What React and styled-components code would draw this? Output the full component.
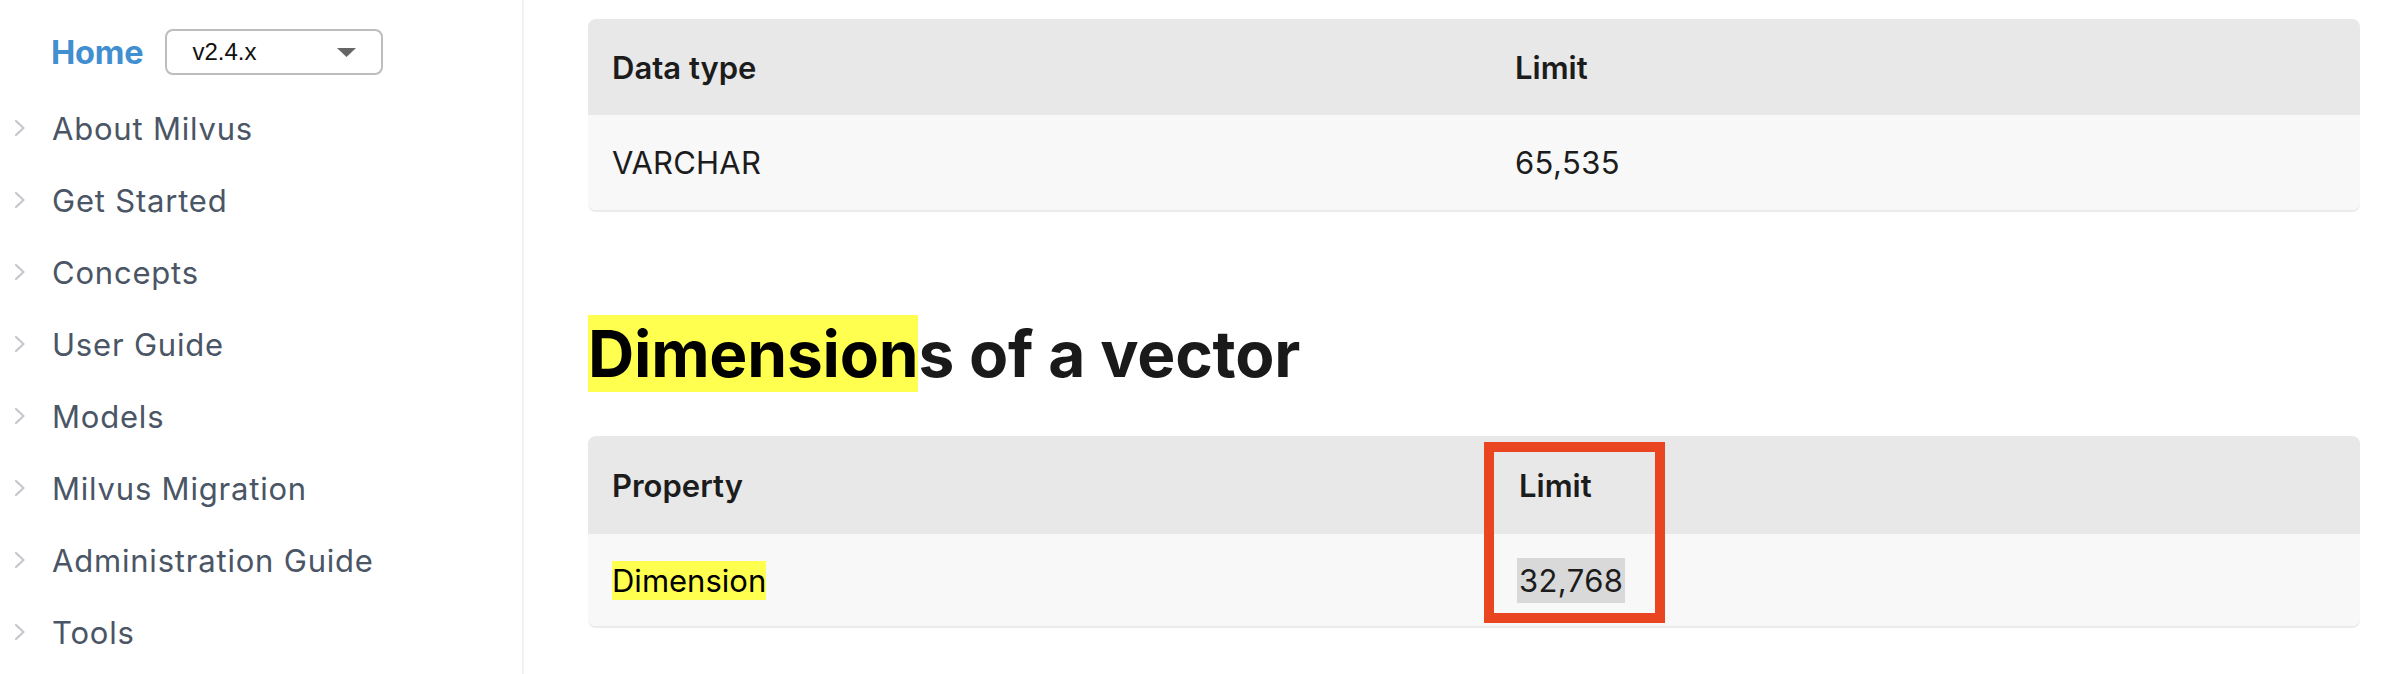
import React from "react";
import styled, { createGlobalStyle } from "styled-components";

const Global = createGlobalStyle`
  html, body { margin: 0; padding: 0; background: #fff; }
  body { height: 674px; overflow: hidden; font-family: Inter, "Noto Sans", sans-serif; }
  * { box-sizing: border-box; }
`;

const Page = styled.div`
  display: flex;
  height: 674px;
`;

const Sidebar = styled.aside`
  width: 524px;
  flex: none;
  border-right: 2px solid #eef1f5;
  padding-top: 29px;
`;

const HeaderRow = styled.div`
  display: flex;
  align-items: center;
  gap: 22px;
  height: 46px;
  padding-left: 51px;
`;

const HomeLink = styled.a`
  font-family: Inter, sans-serif;
  font-weight: 700;
  font-size: 32.5px;
  color: #418fd0;
  text-decoration: none;
  letter-spacing: -0.2px;
`;

const VersionSelect = styled.div`
  width: 218px;
  height: 46px;
  border: 2px solid #bdbdbd;
  border-radius: 8px;
  padding: 0 25px 0 25px;
  display: flex;
  align-items: center;
  justify-content: space-between;
  font-family: "Liberation Sans", Arial, sans-serif;
  font-size: 24px;
  color: #111;
`;

const NavList = styled.ul`
  list-style: none;
  margin: 17px 0 0;
  padding: 0;
`;

const NavItem = styled.li`
  height: 72px;
  display: flex;
  align-items: center;
  padding-left: 12px;
`;

const ChevronSlot = styled.span`
  width: 40px;
  display: flex;
  align-items: center;
`;

const NavLabel = styled.span`
  font-family: Inter, sans-serif;
  font-size: 31px;
  color: #4a5565;
  letter-spacing: 0.8px;
`;

const Main = styled.main`
  flex: 1;
  padding: 19px 38px 0 64px;
`;

const TableWrap = styled.div`
  position: relative;
  border-radius: 8px;
  box-shadow: 0 2px 0 #ebebeb;
`;

const Table = styled.table`
  width: 100%;
  border-collapse: collapse;
  border-radius: 8px;
  overflow: hidden;
  font-family: Inter, sans-serif;
  font-size: 31px;
  color: #1c1c1c;
`;

const HeadCell = styled.th`
  background: #e8e8e8;
  text-align: left;
  font-weight: 600;
  height: ${(p) => p.$h}px;
  padding: 0 24px;
  width: ${(p) => (p.$w ? `${p.$w}px` : "auto")};
`;

const Cell = styled.td`
  background: #f8f8f8;
  height: ${(p) => p.$h}px;
  padding: 0 24px;
  font-weight: 400;
  letter-spacing: ${(p) => p.$ls || "0"};
`;

const Heading = styled.h2`
  margin: 105px 0 44px;
  font-family: Inter, sans-serif;
  font-weight: 700;
  font-size: 64px;
  line-height: 77px;
  height: 77px;
  color: #1a1a1a;
  letter-spacing: -0.2px;
`;

const Mark = styled.span`
  display: inline-block;
  background: #ffff4f;
  color: #000;
  line-height: ${(p) => p.$lh || "inherit"};
`;

const GrayMark = styled.span`
  display: inline-block;
  background: #d9d9d9;
  line-height: 45px;
  padding: 0 2px;
  margin-left: -2px;
  letter-spacing: 0.4px;
`;

const Callout = styled.div`
  position: absolute;
  left: 896px;
  top: 6px;
  width: 181px;
  height: 181px;
  border: 10px solid #e84520;
  pointer-events: none;
`;

const Chevron = () => (
  <svg width="14" height="18" viewBox="0 0 14 18">
    <polyline points="4,2 11.5,9 4,16" fill="none" stroke="#c4c7cc" strokeWidth="2.2" strokeLinecap="round" strokeLinejoin="round" />
  </svg>
);

const Caret = () => (
  <svg width="19" height="9" viewBox="0 0 19 9">
    <polygon points="0,0 19,0 9.5,9" fill="#666" />
  </svg>
);

const navItems = [
  "About Milvus",
  "Get Started",
  "Concepts",
  "User Guide",
  "Models",
  "Milvus Migration",
  "Administration Guide",
  "Tools",
];

export default function App() {
  return (
    <>
      <Global />
      <Page>
        <Sidebar>
          <HeaderRow>
            <HomeLink href="#">Home</HomeLink>
            <VersionSelect>
              <span>v2.4.x</span>
              <Caret />
            </VersionSelect>
          </HeaderRow>
          <NavList>
            {navItems.map((t) => (
              <NavItem key={t}>
                <ChevronSlot>
                  <Chevron />
                </ChevronSlot>
                <NavLabel>{t}</NavLabel>
              </NavItem>
            ))}
          </NavList>
        </Sidebar>
        <Main>
          <TableWrap>
            <Table>
              <thead>
                <tr>
                  <HeadCell $h={96} $w={903}>Data type</HeadCell>
                  <HeadCell $h={96}>Limit</HeadCell>
                </tr>
              </thead>
              <tbody>
                <tr>
                  <Cell $h={95} $ls="0.2px">VARCHAR</Cell>
                  <Cell $h={95} $ls="0.4px">65,535</Cell>
                </tr>
              </tbody>
            </Table>
          </TableWrap>
          <Heading>
            <Mark>Dimension</Mark>s of a vector
          </Heading>
          <TableWrap>
            <Table>
              <thead>
                <tr>
                  <HeadCell $h={98} $w={907}>Property</HeadCell>
                  <HeadCell $h={98}>Limit</HeadCell>
                </tr>
              </thead>
              <tbody>
                <tr>
                  <Cell $h={92}>
                    <Mark $lh="39px">Dimension</Mark>
                  </Cell>
                  <Cell $h={92}>
                    <GrayMark>32,768</GrayMark>
                  </Cell>
                </tr>
              </tbody>
            </Table>
            <Callout />
          </TableWrap>
        </Main>
      </Page>
    </>
  );
}
